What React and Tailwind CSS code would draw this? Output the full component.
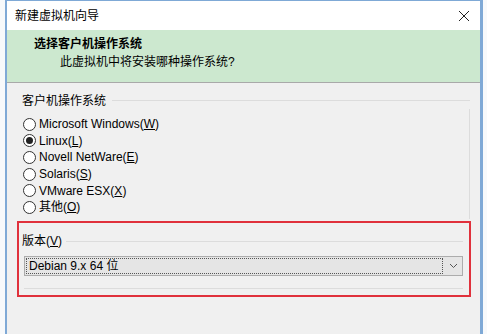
import React from "react";

const font = { fontFamily: '"Liberation Sans", "Noto Sans CJK SC", sans-serif' };

const options = [
    { label: "Microsoft Windows", key: "W" },
    { label: "Linux", key: "L", checked: true },
    { label: "Novell NetWare", key: "E" },
    { label: "Solaris", key: "S" },
    { label: "VMware ESX", key: "X" },
    { label: "其他", key: "O" },
];

function Radio({ label, hotkey, checked }) {
    return (
        <div className="flex items-center h-[16.6px] gap-[3px]">
            <span className="w-[13px] h-[13px] rounded-full border border-[#333] bg-white flex items-center justify-center">
                {checked && <span className="w-[7px] h-[7px] rounded-full bg-[#222]" />}
            </span>
            <span className="text-[12px] text-black leading-none">
                {label}(<span className="underline">{hotkey}</span>)
            </span>
        </div>
    );
}

export default function App() {
    return (
        <div className="w-[487px] h-[334px] bg-[#f7f9fb] flex overflow-hidden" style={font}>
            <div className="ml-[5px] w-[478px] h-full border-l-2 border-r-[3px] border-t border-[#7fa9d6] flex flex-col">
                {/* Title bar */}
                <div className="h-[29px] bg-white flex items-center justify-between pl-[8px] pr-[10px]">
                    <span className="text-[12px] text-black">新建虚拟机向导</span>
                    <svg width="12" height="12" viewBox="0 0 12 12">
                        <path d="M1 1L11 11M11 1L1 11" stroke="#222" strokeWidth="1" />
                    </svg>
                </div>

                {/* Header */}
                <div className="h-[53px] bg-[#cce8cf] border-b border-[#a9a9a9] flex flex-col pt-[5px]">
                    <div className="pl-[27px] text-[12px] font-bold text-black leading-[19px]">选择客户机操作系统</div>
                    <div className="pl-[53px] text-[12px] text-black leading-[16px]">此虚拟机中将安装哪种操作系统?</div>
                </div>

                {/* Content */}
                <div className="flex-1 bg-[#f0f0f0] pl-[10px] pr-[9px] pt-[9px]">
                    {/* Guest OS group */}
                    <div className="flex items-center h-[17px] pl-[5px] pr-[1px]">
                        <span className="text-[12px] text-black">客户机操作系统</span>
                        <span className="flex-1 ml-[6px] border-t border-[#dcdcdc]" />
                    </div>
                    <div className="pl-[6px] pt-[7px] pb-[3px] border-r border-[#dcdcdc] mr-[1px]">
                        {options.map((o) => (
                            <Radio key={o.key} label={o.label} hotkey={o.key} checked={o.checked} />
                        ))}
                    </div>

                    {/* Version group, highlighted */}
                    <div className="h-[76px] border-2 border-[#e0313c] pl-[3px] pr-[6px] pt-[11px] mt-[2px]">
                        <div className="flex items-center h-[15px]">
                            <span className="text-[12px] text-black">
                                版本(<span className="underline">V</span>)
                            </span>
                            <span className="flex-1 ml-[4px] border-t border-[#dcdcdc]" />
                        </div>
                        <div className="mt-[7px] ml-[2px] h-[20px] flex border border-[#acacac] bg-[#e5e5e5]">
                            <div className="flex-1 m-[1px] border border-dotted border-[#555] flex items-center pl-[2px]">
                                <span className="text-[12px] text-black leading-none">Debian 9.x 64 位</span>
                            </div>
                            <div className="w-[18px] flex items-center justify-center">
                                <svg width="9" height="6" viewBox="0 0 9 6">
                                    <path d="M1 1L4.5 4.5L8 1" stroke="#555" strokeWidth="1" fill="none" />
                                </svg>
                            </div>
                        </div>
                        <div className="mt-[12px] ml-[2px] border-t border-[#dcdcdc]" />
                    </div>
                </div>
            </div>
        </div>
    );
}
